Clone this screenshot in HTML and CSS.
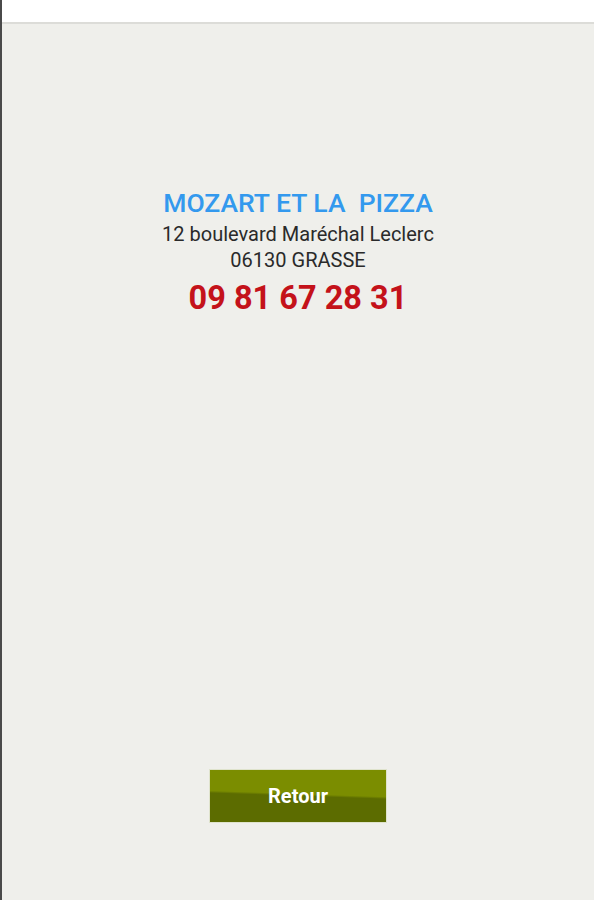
FILE: index.html
```html
<!DOCTYPE html>
<html>
  <head>
    <title>Mozart et la Pizza</title>
    <link rel="stylesheet" href="styles.css">
  </head>
  <body>
    <div class="topbar"></div>
    <div class="page">
      <div class="info">
        <h1 class="name">MOZART ET LA &nbsp;PIZZA</h1>
        <p class="addr first">12 boulevard Maréchal Leclerc</p>
        <p class="addr">06130 GRASSE</p>
        <p class="phone">09 81 67 28 31</p>
      </div>
      <div class="actions">
        <button class="back">Retour</button>
      </div>
    </div>
  </body>
</html>
```

FILE: styles.css
```css
html, body {
  margin: 0;
  height: 100%;
}

body {
  font-family: Roboto, 'Liberation Sans', sans-serif;
  background: #efefeb;
  border-left: 2px solid #4a4a4a;
  display: flex;
  flex-direction: column;
  box-sizing: border-box;
}

.topbar {
  height: 22px;
  background: #ffffff;
  border-bottom: 2px solid #dcdcd8;
}

.page {
  flex: 1;
  display: flex;
  flex-direction: column;
  align-items: center;
  text-align: center;
}

.info {
  padding-top: 164px;
}

.name {
  margin: 0;
  font-size: 26.5px;
  font-weight: 500;
  color: #3399ee;
  line-height: 30px;
}

.addr {
  margin: 0;
  font-size: 20px;
  color: #2a2a2a;
  line-height: 26px;
}

.addr.first {
  margin-top: 3px;
}

.phone {
  margin: 7px 0 0;
  font-size: 32.5px;
  font-weight: 700;
  color: #c4121a;
  line-height: 36px;
}

.actions {
  margin-top: 453px;
}

.back {
  width: 178px;
  height: 54px;
  border: 1px solid #dfe3cc;
  background: linear-gradient(182deg, #7b8d00 0%, #7b8d00 46%, #5c6c00 50%, #5c6c00 100%);
  color: #fff;
  font-family: Roboto, 'Liberation Sans', sans-serif;
  font-size: 20px;
  font-weight: 700;
  cursor: pointer;
}
```
